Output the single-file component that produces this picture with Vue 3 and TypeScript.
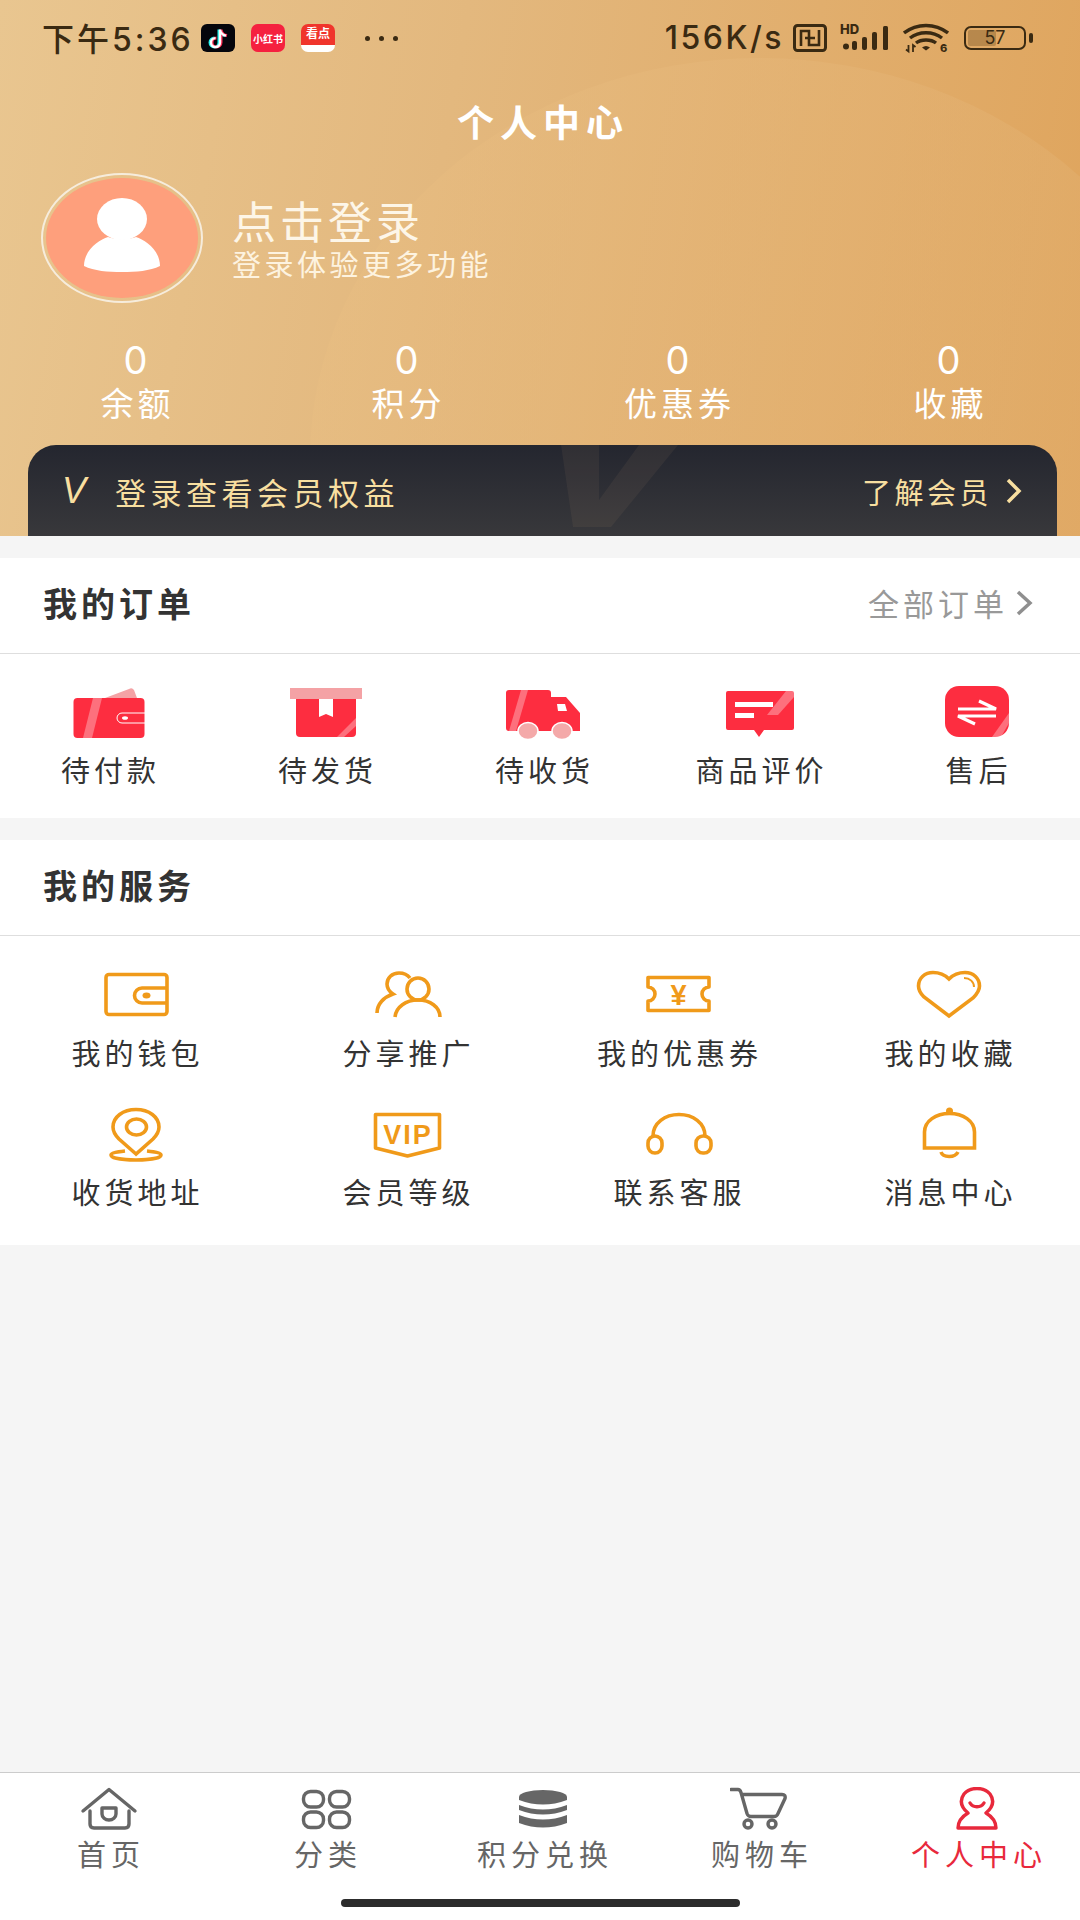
<script setup lang="ts">
interface IconItem {
	label: string;
	icon: string;
}

const RED = "#fd2d40";
const PINK = "#f4a2a5";
const SHINE = 'fill="#fff" fill-opacity="0.32"';

const stats = ["余额", "积分", "优惠券", "收藏"];

const orders: IconItem[] = [
	{
		label: "待付款",
		icon: `<path d="M36 14 60 5q3-2 5 1l3 8z" fill="${PINK}"/><rect x="4.5" y="14" width="71" height="40" rx="4" fill="${RED}"/><path d="M24 14h9L23 54h-9z" ${SHINE}/><path d="M76 29H53a5 5 0 0 0 0 10h23" fill="none" stroke="#fff" stroke-width="1"/><ellipse cx="56" cy="34" rx="3" ry="1.8" fill="#fff"/>`,
	},
	{
		label: "待发货",
		icon: `<rect x="4" y="4" width="72" height="11" fill="${PINK}"/><path d="M10 15h60v34q0 4-4 4H14q-4 0-4-4z" fill="${RED}"/><path d="M33 15h14v18l-7-3-7 3z" fill="#fff"/><path d="M70 34 51 53h7l12-11z" ${SHINE}/>`,
	},
	{
		label: "待收货",
		icon: `<path d="M6 6h39q3 0 3 3v4h15l14 16v18H6q-3 0-3-3V9q0-3 3-3z" fill="${RED}"/><path d="M18 6h7L13 47H6z" ${SHINE}/><path d="M54 20h8l2 7h-9z" fill="#fff"/><ellipse cx="25" cy="47" rx="10" ry="8.5" fill="#f4a9a9" stroke="#fff" stroke-width="1.5"/><ellipse cx="59" cy="47" rx="10" ry="8.5" fill="#f4a9a9" stroke="#fff" stroke-width="1.5"/>`,
	},
	{
		label: "商品评价",
		icon: `<path d="M8 7h64q2 0 2 2v35q0 2-2 2H44l-5 7-5-7H8q-2 0-2-2V9q0-2 2-2z" fill="${RED}"/><rect x="15" y="18" width="38" height="5" fill="#fff"/><rect x="15" y="29" width="19" height="5" fill="#fff"/><path d="M66 7h8v6L58 31H47z" ${SHINE}/>`,
	},
	{
		label: "售后",
		icon: `<rect x="8" y="2" width="64" height="51" rx="14" fill="${RED}"/><path d="M72 29v10l-8 14H55z" ${SHINE}/><path d="M21 25h38L42 17M59 32H21l17 8" fill="none" stroke="#fff" stroke-width="3.2"/>`,
	},
];

const services: IconItem[] = [
	{
		label: "我的钱包",
		icon: `<rect x="5" y="7.5" width="61" height="40" rx="3"/><path d="M66 21H41a7.5 7.5 0 0 0 0 15h25"/><ellipse cx="45.5" cy="28.5" rx="4" ry="3" fill="#f09a1a" stroke="none"/>`,
	},
	{
		label: "分享推广",
		icon: `<path d="M38 11c-3-4-7-5-11-5-7 0-12 5-12 11 0 5 3 8 6 10-9 3-16 10-16 19"/><circle cx="46" cy="22" r="11"/><path d="M23 50c1-10 11-17 23-17s22 7 22 17"/>`,
	},
	{
		label: "我的优惠券",
		icon: `<path d="M5 10.5h61V20a7 7 0 0 0 0 14v9.500H5V34a7 7 0 0 0 0-14z" stroke-linejoin="round"/><text x="35.500" y="38" text-anchor="middle" font-family="Liberation Sans, sans-serif" font-size="29" font-weight="700" fill="#f09a1a" stroke="none">¥</text>`,
	},
	{
		label: "我的收藏",
		icon: `<path d="M35 12c-5-5-10-6.500-16-6.500-8 0-14.500 5.500-14.500 13.500 0 5 2.500 8 5.500 11l25 19 24-18c4-4 6.500-7 6.500-12 0-8-6.500-13.500-14.500-13.500-6 0-11 1.500-16 6.500z"/><path d="M50 11c6 0 10 4 10 9" stroke-width="2"/>`,
	},
	{
		label: "收货地址",
		icon: `<path d="M35 48 18 33c-5-5-6-9-6-12C12 11 22 3.500 35 3.500S58 11 58 21c0 3-1 7-6 12z"/><ellipse cx="35.500" cy="21" rx="10" ry="8"/><path d="M24 45c-9 1-14 2-14 4 0 3 10 5 25 5s25-2 25-5c0-2-5-3-14-4"/>`,
	},
	{
		label: "会员等级",
		icon: `<path d="M3.500 8.500h64V42l-32 8-32-8z" stroke-linejoin="round"/><text x="36" y="38" text-anchor="middle" font-family="Liberation Sans, sans-serif" font-size="27" font-weight="700" letter-spacing="2" fill="#f09a1a" stroke="none">VIP</text>`,
	},
	{
		label: "联系客服",
		icon: `<path d="M10 30c0-13 12-21.500 26-21.500S62 17 62 30"/><rect x="5" y="30" width="14" height="17" rx="7"/><rect x="53" y="30" width="15" height="17" rx="7"/>`,
	},
	{
		label: "消息中心",
		icon: `<circle cx="35.500" cy="5" r="3.500" fill="#f09a1a" stroke="none"/><path d="M10.500 42V26c0-11 11.500-18.500 25-18.500s25 7.500 25 18.500v16z"/><path d="M27 46c2 6 14 6 17 0"/>`,
	},
];

const tabs: (IconItem & { active?: boolean })[] = [
	{
		label: "首页",
		icon: `<path d="M4 24 30 2.500 56 24"/><path d="M11 24v13q0 4 4 4h31q4 0 4-4V24"/><path d="M23 21h14v6a7 6 0 0 1-14 0z"/>`,
	},
	{
		label: "分类",
		icon: `<rect x="7.500" y="4.500" width="20" height="15.500" rx="7"/><rect x="33.500" y="4.500" width="20" height="15.500" rx="7"/><rect x="7.500" y="25" width="20" height="15.500" rx="7"/><rect x="33.500" y="25" width="20" height="15.500" rx="7"/>`,
	},
	{
		label: "积分兑换",
		icon: `<g fill="#666" stroke="none"><path d="M6 10a24 7 0 0 1 48 0v3q-24 9-48 0z"/><path d="M6 18q24 9 48 0v5q-24 9-48 0z"/><path d="M6 28q24 9 48 0v8q-24 9-48 0z"/></g>`,
	},
	{
		label: "购物车",
		icon: `<path d="M1 2.500h7q2 0 3 3l6 21q1 3 4 3h23q3 0 4-3l7-15q1-4-3-4H12"/><circle cx="18" cy="37" r="4"/><circle cx="42" cy="37" r="4"/>`,
	},
	{
		label: "个人中心",
		active: true,
		icon: `<path d="M21 26c-7-6-9-12-4-19 4-5 9-5.500 13-5.500s9 .5 13 5.500c5 7 3 13-4 19 5 3 10 7 10 15H11c0-8 5-12 10-15z"/><path d="M23 16c3 5 11 5 14 0"/>`,
	},
];
</script>

<template>
	<div class="page">
		<header class="hero">
			<div class="hero-arc"></div>
			<div class="status">
				<div class="status-left">
					<span class="clock">下午5:36</span>
					<svg class="app-icon" viewBox="0 0 34 28">
						<rect width="34" height="28" rx="6" fill="#05060c" />
						<path d="M19 5v13a4.500 4.500 0 1 1-4.500-4.500M19 5c.5 3.500 3 5.500 6 6" fill="none" stroke="#25f4ee" stroke-width="3" transform="translate(-1 .6)" />
						<path d="M19 5v13a4.500 4.500 0 1 1-4.500-4.500M19 5c.5 3.500 3 5.500 6 6" fill="none" stroke="#fe2c55" stroke-width="3" transform="translate(1 .6)" />
						<path d="M19 5v13a4.500 4.500 0 1 1-4.500-4.500M19 5c.5 3.500 3 5.500 6 6" fill="none" stroke="#fff" stroke-width="2.400" transform="translate(0 .6)" />
					</svg>
					<span class="app-badge xhs">小红书</span>
					<span class="app-badge kandian">看点</span>
					<span class="dots"><i></i><i></i><i></i></span>
				</div>
				<div class="status-right">
					<span class="speed">156K/s</span>
					<svg class="sys-nfc" viewBox="0 0 34 28" fill="none" stroke="#3a2a12">
						<rect x="1.500" y="1.500" width="31" height="25" rx="3" stroke-width="3" />
						<path d="M8 22V7h8v14h10V6M12 14l10 0" stroke-width="2.600" />
					</svg>
					<svg class="sys-signal" viewBox="0 -4 50 36" fill="#3a2a12">
						<text x="0" y="10" font-family="Inter, sans-serif" font-size="13" font-weight="800">HD</text>
						<circle cx="6" cy="22.500" r="3" />
						<rect x="12" y="17" width="5" height="9" rx="2" />
						<rect x="22" y="13" width="5" height="13" rx="2" />
						<rect x="32" y="8" width="5" height="18" rx="2" />
						<rect x="43" y="2" width="5" height="24" rx="1.500" />
					</svg>
					<svg class="sys-wifi" viewBox="0 -4 46 36" fill="none" stroke="#3a2a12" stroke-width="3.400">
						<path d="M1 9c13-10 31-10 44 0M7 14c9-7 23-7 32 0M13 19c5-4 15-4 20 0" />
						<path d="M19 23.500q4-3 8 0l-4 3z" fill="#3a2a12" stroke="none" />
						<path d="M3 25.500l2.500 2V21M10 28v-7l2.500 2" stroke-width="1.800" />
						<text x="37" y="28" font-family="Inter, sans-serif" font-size="11" font-weight="800" fill="#3a2a12" stroke="none">6</text>
					</svg>
					<div class="battery"><span class="battery-level"></span><span class="battery-num">57</span></div>
					<span class="battery-tail"></span>
				</div>
			</div>

			<h1 class="hero-title">个人中心</h1>

			<div class="user">
				<div class="avatar">
					<svg viewBox="0 0 90 90" width="90" height="90" fill="#fff">
						<ellipse cx="45" cy="26" rx="25" ry="21" />
						<path d="M7 73c0-16 15-26 24-29 8 3 20 3 28 0 9 3 24 13 24 29-10 5-24 6-38 6S17 78 7 73z" />
					</svg>
				</div>
				<div class="user-text">
					<div class="user-name">点击登录</div>
					<div class="user-sub">登录体验更多功能</div>
				</div>
			</div>

			<div class="stats">
				<div v-for="s in stats" :key="s" class="stat">
					<div class="stat-value">0</div>
					<div class="stat-label">{{ s }}</div>
				</div>
			</div>

			<div class="vip-bar">
				<svg class="vip-mark" viewBox="0 0 117 91" fill="#d8b080" fill-opacity="0.07">
					<path d="M0 0h38v55L78 0h39L50 82H12z" />
				</svg>
				<div class="vip-left">
					<span class="vip-v">V</span>
					<span class="vip-text">登录查看会员权益</span>
				</div>
				<div class="vip-right">
					<span class="vip-more">了解会员</span>
					<svg width="16" height="26" viewBox="0 0 16 26" fill="none" stroke="#f8dfa0" stroke-width="3.500">
						<path d="M2 2l11 11L2 24" />
					</svg>
				</div>
			</div>
		</header>

		<main class="content">
			<section class="card">
				<div class="card-head">
					<h2 class="card-title">我的订单</h2>
					<div class="card-more">
						<span>全部订单</span>
						<svg width="17" height="26" viewBox="0 0 17 26" fill="none" stroke="#8f8f8f" stroke-width="3.500">
							<path d="M2 2l12 11L2 24" />
						</svg>
					</div>
				</div>
				<div class="order-grid">
					<div v-for="o in orders" :key="o.label" class="grid-item">
						<svg class="grid-icon" width="80" height="56" viewBox="0 0 80 56" v-html="o.icon"></svg>
						<div class="grid-label">{{ o.label }}</div>
					</div>
				</div>
			</section>

			<section class="card">
				<div class="card-head">
					<h2 class="card-title">我的服务</h2>
				</div>
				<div class="service-grid">
					<div v-for="s in services" :key="s.label" class="grid-item">
						<svg class="grid-icon" width="70" height="56" viewBox="0 0 70 56" fill="none" stroke="#f09a1a" stroke-width="3.600" v-html="s.icon"></svg>
						<div class="grid-label">{{ s.label }}</div>
					</div>
				</div>
			</section>
		</main>

		<nav class="tabbar">
			<div class="tabs">
				<div v-for="t in tabs" :key="t.label" :class="['tab', { active: t.active }]">
					<svg width="60" height="44" viewBox="0 0 60 44" fill="none" stroke="currentColor" stroke-width="3.400" stroke-linecap="round" stroke-linejoin="round" v-html="t.icon"></svg>
					<div class="tab-label">{{ t.label }}</div>
				</div>
			</div>
			<div class="home-line"></div>
		</nav>
	</div>
</template>

<style>
html,
body {
	margin: 0;
	background: #f5f5f5;
}
</style>

<style scoped>
.page {
	position: relative;
	display: flex;
	flex-direction: column;
	width: 1080px;
	height: 1920px;
	overflow: hidden;
	background: #f5f5f5;
	font-family: "Noto Sans CJK SC", "Noto Sans", sans-serif;
	color: #333;
}

.hero {
	position: relative;
	height: 536px;
	flex-shrink: 0;
	overflow: hidden;
	background: linear-gradient(100deg, #e9c690 0%, #e3b87e 40%, #dfa45c 100%);
}

.hero-arc {
	position: absolute;
	left: 310px;
	top: 58px;
	width: 900px;
	height: 800px;
	border-radius: 50%;
	background: linear-gradient(100deg, #e9bf84, #e0ab69);
	opacity: 0.5;
}

.status {
	position: relative;
	display: flex;
	justify-content: space-between;
	align-items: center;
	height: 76px;
	padding: 0 47px 0 42px;
	color: #3a2a12;
}

.status-left,
.status-right {
	display: flex;
	align-items: center;
}

.clock {
	width: 159px;
	margin-top: -3px;
	font-family: Inter, "Noto Sans CJK SC", sans-serif;
	font-size: 32px;
	font-weight: 500;
	letter-spacing: 3px;
	white-space: nowrap;
}

.app-icon {
	width: 34px;
	height: 28px;
}

.app-badge {
	display: flex;
	align-items: center;
	justify-content: center;
	width: 34px;
	height: 28px;
	margin-left: 16px;
	border-radius: 7px;
	background: #f5213f;
	color: #fff;
	font-size: 10px;
	font-weight: 700;
	white-space: nowrap;
}

.app-badge.kandian {
	background: linear-gradient(#f0352c 74%, #fff 74%);
	align-items: flex-start;
	font-size: 12px;
	line-height: 18px;
}

.dots {
	display: flex;
	gap: 9px;
	margin-left: 30px;
}

.dots i {
	width: 5px;
	height: 5px;
	border-radius: 50%;
	background: #3a2a12;
}

.speed {
	margin-right: 9px;
	margin-top: -2px;
	font-family: Inter, sans-serif;
	font-size: 32px;
	font-weight: 500;
	letter-spacing: 2.500px;
}

.sys-nfc {
	width: 34px;
	height: 28px;
	margin-right: 13px;
}

.sys-signal {
	width: 50px;
	height: 36px;
	margin: -4px 13px -4px 0;
}

.sys-wifi {
	width: 46px;
	height: 36px;
	margin: -4px 15px -4px 0;
}

.battery {
	position: relative;
	width: 62px;
	height: 24px;
	box-sizing: border-box;
	border: 2.5px solid #3a2a12;
	border-radius: 7px;
}

.battery-level {
	position: absolute;
	left: 2px;
	top: 2px;
	bottom: 2px;
	width: 28px;
	border-radius: 2px;
	background: rgba(90, 60, 20, 0.3);
}

.battery-num {
	position: absolute;
	inset: 0;
	text-align: center;
	font-family: Inter, sans-serif;
	font-size: 18px;
	line-height: 19px;
}

.battery-tail {
	width: 4px;
	height: 10px;
	margin-left: 3px;
	border-radius: 2px;
	background: #3a2a12;
}

.hero-title {
	position: relative;
	margin: 20px 0 0;
	text-align: center;
	text-indent: 6px;
	color: #fff;
	font-size: 37px;
	font-weight: 700;
	line-height: 50px;
	letter-spacing: 6px;
}

.user {
	position: relative;
	display: flex;
	align-items: center;
	margin-top: 27px;
	padding-left: 41px;
}

.avatar {
	display: flex;
	align-items: center;
	justify-content: center;
	box-sizing: border-box;
	width: 162px;
	height: 130px;
	padding: 3px;
	border-radius: 50%;
	background: #fe9f7c content-box;
	border: 2px solid #f6ecdc;
}

.user-text {
	margin-left: 29px;
}

.user-name {
	color: #fdf6e8;
	font-size: 44px;
	line-height: 44px;
	letter-spacing: 4px;
}

.user-sub {
	margin-top: 5px;
	color: #fdf3e0;
	font-size: 29px;
	line-height: 32px;
	letter-spacing: 3.500px;
}

.stats {
	position: relative;
	display: grid;
	grid-template-columns: repeat(4, 271px);
	margin-top: 37px;
	color: #fff;
	text-align: center;
}

.stat-value {
	font-family: Inter, sans-serif;
	font-size: 38px;
	font-weight: 400;
	line-height: 40px;
}

.stat-label {
	margin-top: 2px;
	font-size: 33px;
	line-height: 40px;
	letter-spacing: 4px;
	text-indent: 4px;
}

.vip-bar {
	position: relative;
	display: flex;
	justify-content: space-between;
	align-items: flex-start;
	box-sizing: border-box;
	height: 91px;
	margin: 23px 23px 0 28px;
	padding: 28px 35px 0 34px;
	border-radius: 28px 28px 0 0;
	background: linear-gradient(#24262f, #38383b);
	color: #f8dfa0;
}

.vip-mark {
	position: absolute;
	left: 533px;
	top: 0;
	width: 117px;
	height: 91px;
}

.vip-left,
.vip-right {
	position: relative;
	display: flex;
	align-items: center;
	height: 36px;
}

.vip-v {
	width: 53px;
	font-family: "Liberation Sans", sans-serif;
	font-size: 36px;
	font-style: italic;
	font-weight: 400;
}

.vip-text {
	font-size: 31px;
	letter-spacing: 4.500px;
}

.vip-right {
	gap: 14px;
}

.vip-more {
	font-size: 29px;
	letter-spacing: 3.500px;
}

.content {
	flex: 1;
	padding-top: 22px;
}

.card {
	margin-bottom: 22px;
	background: #fff;
}

.card-head {
	display: flex;
	justify-content: space-between;
	align-items: center;
	box-sizing: border-box;
	height: 96px;
	padding: 0 47px 6px 43px;
	border-bottom: 1px solid #dedede;
}

.card-title {
	margin: 0;
	color: #333;
	font-size: 34px;
	font-weight: 700;
	letter-spacing: 4px;
}

.card-more {
	display: flex;
	align-items: center;
	gap: 8px;
	color: #999;
	font-size: 31px;
	letter-spacing: 4px;
}

.order-grid {
	display: grid;
	grid-template-columns: repeat(5, 217px);
	padding: 30px 0 31px;
}

.service-grid {
	display: grid;
	grid-template-columns: repeat(4, 271px);
	row-gap: 36px;
	padding: 31px 0 36px;
}

.grid-item {
	display: flex;
	flex-direction: column;
	align-items: center;
}

.grid-icon {
	display: block;
}

.grid-label {
	margin-top: 11px;
	color: #333;
	font-size: 29px;
	line-height: 36px;
	letter-spacing: 4px;
	text-indent: 4px;
	white-space: nowrap;
}

.tabbar {
	flex-shrink: 0;
	height: 148px;
	box-sizing: border-box;
	padding-top: 14px;
	border-top: 1px solid #ccc;
	background: #fff;
}

.tabs {
	display: grid;
	grid-template-columns: repeat(5, 217px);
}

.tab {
	display: flex;
	flex-direction: column;
	align-items: center;
	color: #666;
}

.tab.active {
	color: #e8293c;
}

.tab-label {
	margin-top: 5px;
	font-size: 29px;
	line-height: 34px;
	letter-spacing: 5px;
	text-indent: 5px;
	white-space: nowrap;
}

.home-line {
	width: 399px;
	height: 8px;
	margin: 29px auto 0;
	border-radius: 4px;
	background: #2c2c2c;
}
</style>
